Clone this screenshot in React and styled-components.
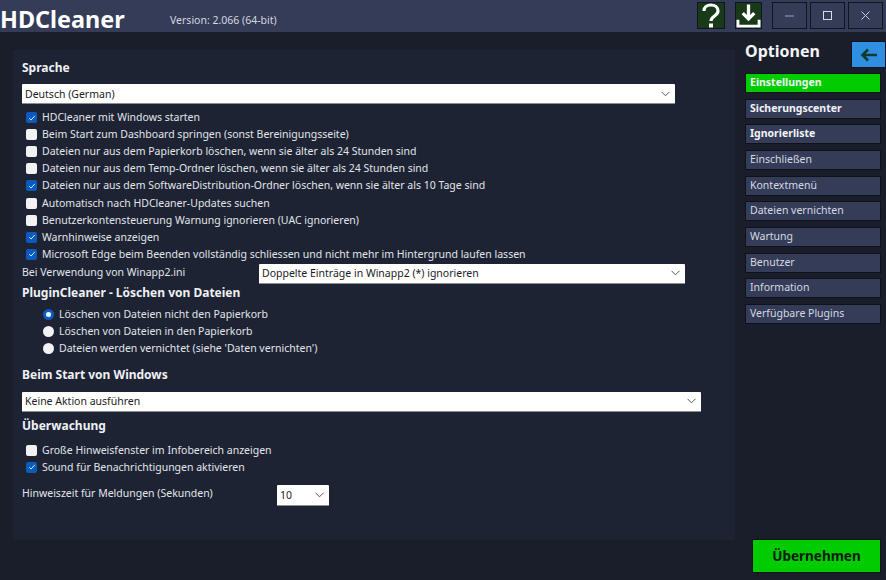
import React from "react";
import styled, { createGlobalStyle } from "styled-components";

const Global = createGlobalStyle`
  html, body { margin: 0; padding: 0; background: #191e2a; }
  body { font-family: "Noto Sans", "Open Sans", sans-serif; }
  * { box-sizing: border-box; }
`;
const Page = styled.div`
  width: 886px; height: 580px; overflow: hidden; display: flex; flex-direction: column;
  background: #191e2a; color: #e6e8ee; font-size: 10.5px;
`;
const Header = styled.header`
  height: 32px; flex: none; background: #343c58; display: flex; align-items: flex-start;
`;
const Logo = styled.div`
  font-size: 23.4px; font-weight: 700; color: #fff; line-height: 38px; height: 32px; width: 170px;
`;
const Version = styled.div`
  font-size: 10.5px; line-height: 40px; color: #d5d8e0; flex: 1;
`;
const IconBtn = styled.div`
  width: ${p => p.$w || 28}px; height: 27px; margin: 2px 10px 0 0; background: #183a18; border: 1px solid #12151f;
  display: flex; align-items: center; justify-content: center; color: #fff;
`;
const WinBtn = styled.div`
  width: 35px; height: 27px; margin: 2px 3px 0 0; background: #343c58; border: 1px solid #12151f;
  display: flex; align-items: center; justify-content: center; color: #c8ccd6;
  &:last-child { margin-right: 3px; }
`;
const Body = styled.div`
  flex: 1; display: flex; align-items: flex-start;
`;
const Panel = styled.main`
  width: 722px; height: 490px; margin: 18px 0 0 13px; background: #1d2333; padding: 9px 9px 0 9px; flex: none;
`;
const Heading = styled.h2`
  margin: ${p => p.$mt || 0}px 0 0; font-size: 12px; font-weight: 700; line-height: 17px; color: #eef0f4;
`;
const Select = styled.div`
  width: ${p => p.$w}px; height: ${p => p.$h || 20}px; background: #fff; border-bottom: 1px solid #8a8d94; border-radius: 1px;
  margin-top: ${p => p.$mt || 0}px; flex: none;
  display: flex; align-items: center; justify-content: space-between; padding: 0 5px 0 3px;
  color: #1c1c1c; font-size: 10.5px;
`;
const Checks = styled.div`
  margin: ${p => p.$mt || 0}px 0 0 4px;
`;
const CheckRow = styled.div`
  height: 17.1px; display: flex; align-items: center; gap: 5px; line-height: 17px; color: #e3e5ea;
`;
const Box = styled.span`
  width: 11px; height: 11px; border-radius: 2px; flex: none; display: flex; align-items: center; justify-content: center;
  background: ${p => (p.$on ? "#0a5bc0" : "#f2f2f2")};
`;
const Line = styled.div`
  display: flex; height: ${p => p.$h || 20}px; margin-top: ${p => p.$mt || 0}px; color: #e3e5ea;
`;
const LineLabel = styled.div`
  width: ${p => p.$w}px; line-height: 16px; flex: none;
`;
const Radios = styled.div`
  margin: 5px 0 0 21px;
`;
const RadioRow = styled.div`
  height: 17px; display: flex; align-items: center; gap: 5px; color: #e3e5ea;
`;
const Radio = styled.span`
  width: 11px; height: 11px; border-radius: 50%; flex: none;
  background: ${p => (p.$on ? "#fff" : "#f2f2f2")};
  border: ${p => (p.$on ? "3px solid #0a5bc0" : "none")};
`;
const Side = styled.aside`
  width: 136px; margin: 0 0 0 10px; flex: none; position: relative;
`;
const SideTitle = styled.div`
  font-size: 16px; font-weight: 700; line-height: 24px; height: 27px; margin-top: 7px; color: #f4f5f8;
`;
const Back = styled.div`
  position: absolute; right: -5px; top: 9px; width: 35px; height: 27px; background: #2f8fe0; border: 1px solid #12151f;
  display: flex; align-items: center; justify-content: center;
`;
const Nav = styled.nav`
  margin-top: 7px; display: flex; flex-direction: column; gap: 5.67px;
`;
const NavItem = styled.div`
  height: 20px; border: 1px solid #0f121a; padding-left: 4px; line-height: 17px; font-size: 10.5px;
  background: ${p => (p.$active ? "#00cc00" : "#343c58")};
  font-weight: ${p => (p.$bold ? 700 : 400)};
  color: ${p => (p.$bold ? "#f2f3f6" : "#d6d9e0")};
`;
const Footer = styled.div`
  position: absolute; left: 752px; top: 539px; width: 129px; height: 34px; background: #00cc00; border: 1px solid #0f121a;
  display: flex; align-items: center; justify-content: center; color: #0c1a10; font-size: 13.5px; font-weight: 700;
`;

const Chevron = () => (
  <svg width="9" height="6" viewBox="0 0 9 6" fill="none" stroke="#55585f" strokeWidth="1"><path d="M.5.8 4.5 4.8 8.5.8" /></svg>
);
const Tick = () => (
  <svg width="8" height="8" viewBox="0 0 8 8" fill="none" stroke="#dbe8fa" strokeWidth="1"><path d="M1.2 4.2 3.1 6 6.8 1.9" /></svg>
);
const Check = ({ on, children }) => (
  <CheckRow><Box $on={on}>{on && <Tick />}</Box><span>{children}</span></CheckRow>
);

const checks = [
  [1, "HDCleaner mit Windows starten"],
  [0, "Beim Start zum Dashboard springen (sonst Bereinigungsseite)"],
  [0, "Dateien nur aus dem Papierkorb löschen, wenn sie älter als 24 Stunden sind"],
  [0, "Dateien nur aus dem Temp-Ordner löschen, wenn sie älter als 24 Stunden sind"],
  [1, "Dateien nur aus dem SoftwareDistribution-Ordner löschen, wenn sie älter als 10 Tage sind"],
  [0, "Automatisch nach HDCleaner-Updates suchen"],
  [0, "Benutzerkontensteuerung Warnung ignorieren (UAC ignorieren)"],
  [1, "Warnhinweise anzeigen"],
  [1, "Microsoft Edge beim Beenden vollständig schliessen und nicht mehr im Hintergrund laufen lassen"],
];
const nav = [
  ["Einstellungen", 1, 1], ["Sicherungscenter", 0, 1], ["Ignorierliste", 0, 1], ["Einschließen"], ["Kontextmenü"],
  ["Dateien vernichten"], ["Wartung"], ["Benutzer"], ["Information"], ["Verfügbare Plugins"],
];

export default function App() {
  return (
    <Page>
      <Global />
      <Header>
        <Logo>HDCleaner</Logo>
        <Version>Version: 2.066 (64-bit)</Version>
        <IconBtn>
          <svg width="18" height="25" viewBox="0 0 18 25" fill="none" stroke="#fff" strokeWidth="3.2"><path d="M2 8C2 4 5 2 9 2s7 2.4 7 6c0 5-7 5-7 10" /><rect x="7" y="20.5" width="4" height="4" fill="#fff" stroke="none" /></svg>
        </IconBtn>
        <IconBtn $w={27}>
          <svg width="25" height="25" viewBox="0 0 26 25" fill="none" stroke="#fff"><path d="M13 1v14M7 10l6 6 6-6" strokeWidth="3.4" /><path d="M2 17v6.5h22V17" strokeWidth="3" /></svg>
        </IconBtn>
        <WinBtn><svg width="10" height="2"><rect width="9" height="1" y="0.5" fill="#9ea3b2" /></svg></WinBtn>
        <WinBtn><svg width="10" height="10" fill="none" stroke="#d8dbe2"><rect x=".5" y=".5" width="8" height="8" /></svg></WinBtn>
        <WinBtn><svg width="10" height="10" fill="none" stroke="#c8ccd6"><path d="M.5.5l8 8M8.5.5l-8 8" /></svg></WinBtn>
      </Header>
      <Body>
        <Panel>
          <Heading>Sprache</Heading>
          <Select $w={653} $mt={8}>Deutsch (German)<Chevron /></Select>
          <Checks $mt={5}>
            {checks.map(([on, t]) => <Check key={t} on={!!on}>{t}</Check>)}
          </Checks>
          <Line $mt={1}>
            <LineLabel $w={237}>Bei Verwendung von Winapp2.ini</LineLabel>
            <Select $w={426}>Doppelte Einträge in Winapp2 (*) ignorieren<Chevron /></Select>
          </Line>
          <Heading $mt={0}>PluginCleaner - Löschen von Dateien</Heading>
          <Radios>
            <RadioRow><Radio $on /><span>Löschen von Dateien nicht den Papierkorb</span></RadioRow>
            <RadioRow><Radio /><span>Löschen von Dateien in den Papierkorb</span></RadioRow>
            <RadioRow><Radio /><span>Dateien werden vernichtet (siehe 'Daten vernichten')</span></RadioRow>
          </Radios>
          <Heading $mt={9}>Beim Start von Windows</Heading>
          <Select $w={679} $mt={9}>Keine Aktion ausführen<Chevron /></Select>
          <Heading $mt={5}>Überwachung</Heading>
          <Checks $mt={8}>
            <Check>Große Hinweisfenster im Infobereich anzeigen</Check>
            <Check on>Sound für Benachrichtigungen aktivieren</Check>
          </Checks>
          <Line $mt={9} $h={21}>
            <LineLabel $w={255}>Hinweiszeit für Meldungen (Sekunden)</LineLabel>
            <Select $w={52} $h={21}>10<Chevron /></Select>
          </Line>
        </Panel>
        <Side>
          <SideTitle>Optionen</SideTitle>
          <Back>
            <svg width="18" height="14" viewBox="0 0 18 14" fill="none" stroke="#123a2a" strokeWidth="2.6"><path d="M17 7H3M8 1.5 2.5 7 8 12.5" /></svg>
          </Back>
          <Nav>
            {nav.map(([t, a, b]) => <NavItem key={t} $active={!!a} $bold={!!b}>{t}</NavItem>)}
          </Nav>
        </Side>
      </Body>
      <Footer>Übernehmen</Footer>
    </Page>
  );
}
